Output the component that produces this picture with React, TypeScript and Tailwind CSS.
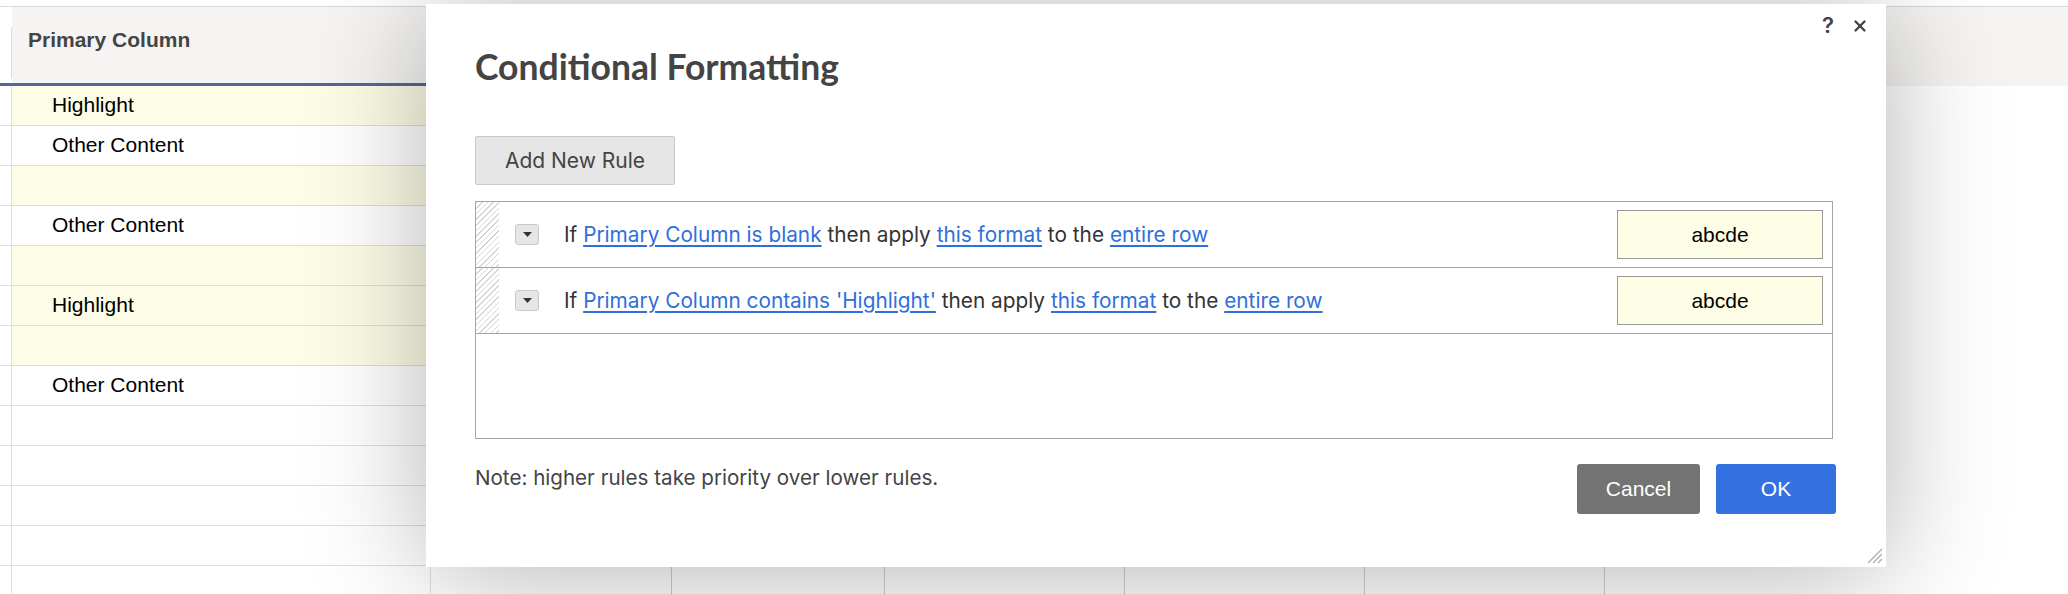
import { X } from "lucide-react";

type GridRow = { text: string; hl: boolean };

const gridRows: GridRow[] = [
  { text: "Highlight", hl: true },
  { text: "Other Content", hl: false },
  { text: "", hl: true },
  { text: "Other Content", hl: false },
  { text: "", hl: true },
  { text: "Highlight", hl: true },
  { text: "", hl: true },
  { text: "Other Content", hl: false },
  { text: "", hl: false },
  { text: "", hl: false },
  { text: "", hl: false },
  { text: "", hl: false },
  { text: "", hl: false },
];

const otherCols = ["w-[241px]", "w-[213px]", "w-[240px]", "w-[240px]", "w-[240px]"];

function Link({ children }: { children: React.ReactNode }) {
  return <span className="text-[#2f6fdb] underline underline-offset-[3px]">{children}</span>;
}

function RuleRow({ condition }: { condition: string }) {
  return (
    <div className="flex h-[66px] items-center border-b border-[#a5a5a5]">
      <div className="h-full w-[23px] bg-[repeating-linear-gradient(135deg,#d6d6d6_0px,#d6d6d6_1px,#ffffff_1px,#ffffff_4px)]" />
      <button className="ml-[16px] flex h-[21px] w-[24px] items-center justify-center rounded-[3px] border border-[#c9c9c9] bg-[#e6e6e6]">
        <svg width="9" height="5" viewBox="0 0 9 5">
          <path d="M0 0h9L4.5 5z" fill="#333" />
        </svg>
      </button>
      <div className="ml-[25px] flex-1 font-['Inter',sans-serif] text-[20.8px] text-[#333]">
        If <Link>{condition}</Link> then apply <Link>this format</Link> to the{" "}
        <Link>entire row</Link>
      </div>
      <div className="mr-[9px] flex h-[49px] w-[206px] items-center justify-center border border-[#999] bg-[#fefde6] font-['Liberation_Sans',Arial,sans-serif] text-[21px] text-black">
        abcde
      </div>
    </div>
  );
}

export default function App() {
  return (
    <div className="relative h-[594px] w-[2068px] overflow-hidden bg-white font-['Liberation_Sans',Arial,sans-serif]">
      {/* sheet grid */}
      <div className="flex flex-col">
        <div className="h-[7px] border-b border-[#d9d9d9]" />
        <div className="flex h-[79px]">
          <div className="flex w-[12px] flex-col border-b-[3px] border-[#54669c]">
            <div className="ml-auto mt-[20px] h-[52px] w-px bg-[#dcdcdc]" />
          </div>
          <div className="w-[419px] border-b-[3px] border-[#54669c] bg-[#f5f4f2] pl-[16px] pt-[21px] text-[21px] font-bold leading-[24px] text-[#444]">
            Primary Column
          </div>
          <div className="flex-1 bg-[#f5f4f2]" />
        </div>
        {gridRows.map((row, i) => (
          <div key={i} className="flex h-[40px]">
            <div className="w-[12px] border-b border-r border-[#dedede]" />
            <div
              className={`w-[419px] border-b border-r border-[#dedede] pl-[40px] text-[21px] leading-[37px] text-black ${
                row.hl ? "bg-[#fdfce6]" : "bg-white"
              }`}
            >
              {row.text}
            </div>
            {otherCols.map((w, j) => (
              <div key={j} className={`${w} border-r border-[#cfcfcf]`} />
            ))}
            <div className="flex-1" />
          </div>
        ))}
      </div>

      {/* dialog */}
      <div className="absolute left-[426px] top-[4px] flex h-[563px] w-[1460px] flex-col bg-white pl-[49px] pr-[50px] shadow-[0_6px_110px_rgba(0,0,0,0.3)]">
        <div className="-mr-[33px] flex h-[42px] items-center justify-end gap-[17px] pt-[1px] font-['Inter',sans-serif] text-[22px] font-semibold text-[#444]">
          <span>?</span>
          <X size={18} strokeWidth={3.2} className="text-[#444]" />
        </div>
        <h2 className="mt-[3px] h-[35px] font-['Lato',sans-serif] text-[35.5px] font-bold leading-[35px] text-[#444]">
          Conditional Formatting
        </h2>
        <div className="mt-[52px]">
          <button className="h-[49px] w-[200px] rounded-[2px] border border-[#cacaca] bg-[#e6e6e6] font-['Inter',sans-serif] text-[21px] text-[#444]">
            Add New Rule
          </button>
        </div>
        <div className="mt-[16px] flex h-[238px] w-[1358px] flex-col border border-[#a5a5a5]">
          <RuleRow condition="Primary Column is blank" />
          <RuleRow condition="Primary Column contains 'Highlight'" />
        </div>
        <div className="mt-[25px] flex items-start">
          <p className="flex-1 font-['Inter',sans-serif] text-[20.6px] leading-[28px] text-[#444]">
            Note: higher rules take priority over lower rules.
          </p>
          <div className="flex gap-[16px]">
            <button className="h-[50px] w-[123px] rounded-[3px] bg-[#737373] text-[21px] text-white">
              Cancel
            </button>
            <button className="h-[50px] w-[120px] rounded-[3px] bg-[#3371e1] text-[21px] text-white">
              OK
            </button>
          </div>
        </div>
        <svg
          className="absolute bottom-[3px] right-[3px]"
          width="18"
          height="18"
          viewBox="0 0 18 18"
        >
          <path d="M17 3L3 17M17 8L8 17M17 13L13 17" stroke="#b5b5b5" strokeWidth="1.5" />
        </svg>
      </div>
    </div>
  );
}
